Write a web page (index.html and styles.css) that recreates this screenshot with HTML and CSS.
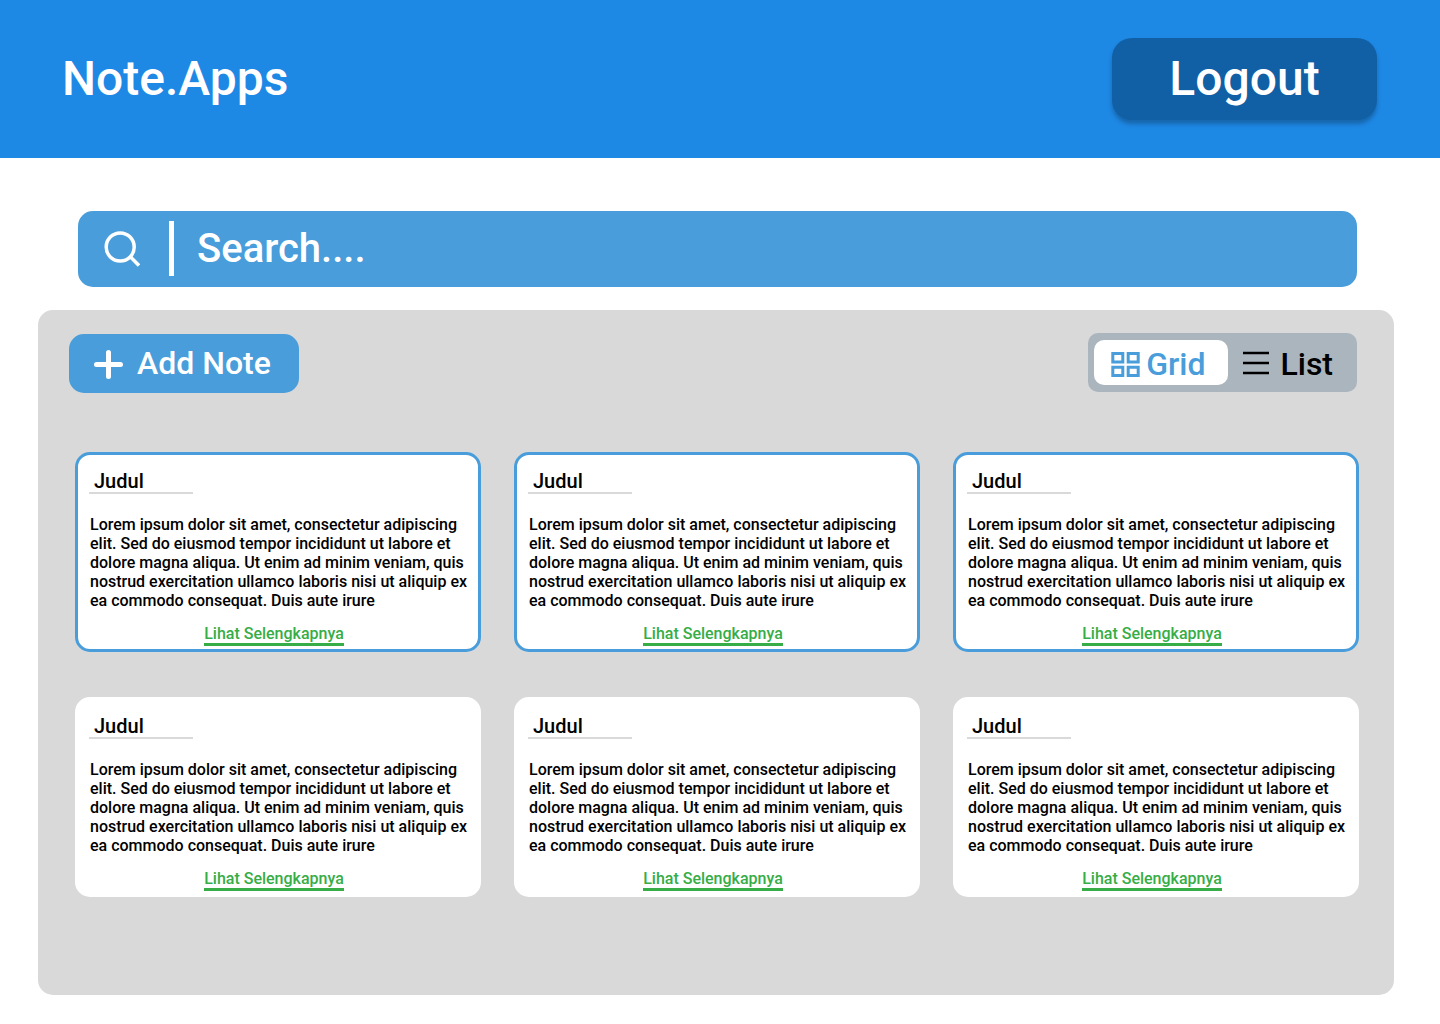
FILE: index.html
```html
<!DOCTYPE html>
<html lang="id">
<head>
  <meta charset="utf-8">
  <meta name="viewport" content="width=device-width, initial-scale=1">
  <title>Note.Apps</title>
  <link rel="stylesheet" href="styles.css">
</head>
<body>
  <header class="header">
    <h1 class="brand">Note.Apps</h1>
    <button class="logout" type="button">Logout</button>
  </header>

  <main>
    <label class="search">
      <svg class="search-icon" viewBox="0 0 36 36" fill="none" stroke="currentColor" stroke-width="3.5" aria-hidden="true">
        <circle cx="16.2" cy="16" r="14"/>
        <path d="M26.3 25.8 35 34.5"/>
      </svg>
      <span class="search-divider"></span>
      <input class="search-input" type="text" placeholder="Search...." aria-label="Search">
    </label>

    <section class="panel">
      <div class="toolbar">
        <button class="add-note" type="button">
          <svg class="plus-icon" viewBox="0 0 29 31" fill="none" stroke="currentColor" stroke-width="5" stroke-linecap="round" aria-hidden="true">
            <path d="M14.5 4.5v24M2.5 16.5h24"/>
          </svg>
          Add Note
        </button>
        <div class="view-toggle">
          <button class="view view-active" type="button" aria-pressed="true">
            <svg class="grid-icon" viewBox="0 0 29 25" fill="none" stroke="currentColor" stroke-width="3" aria-hidden="true">
              <path d="M1.8 1.5h10v8.6h-10zM17.2 1.5h10v8.6h-10zM1.8 15.2h10v8.3h-10zM17.2 15.2h10v8.3h-10z"/>
            </svg>
            Grid
          </button>
          <button class="view view-list" type="button" aria-pressed="false">
            <svg class="list-icon" viewBox="0 0 26 26" fill="none" stroke="currentColor" stroke-width="2.6" aria-hidden="true">
              <path d="M0 2h26M0 12h26M0 22h26"/>
            </svg>
            List
          </button>
        </div>
      </div>

      <div class="notes">
        <article class="note note-selected">
          <h2 class="note-title">Judul</h2>
          <p class="note-text">Lorem ipsum dolor sit amet, consectetur adipiscing elit. Sed do eiusmod tempor incididunt ut labore et dolore magna aliqua. Ut enim ad minim veniam, quis nostrud exercitation ullamco laboris nisi ut aliquip ex ea commodo consequat. Duis aute irure</p>
          <a class="note-more" href="#">Lihat Selengkapnya</a>
        </article>
        <article class="note note-selected">
          <h2 class="note-title">Judul</h2>
          <p class="note-text">Lorem ipsum dolor sit amet, consectetur adipiscing elit. Sed do eiusmod tempor incididunt ut labore et dolore magna aliqua. Ut enim ad minim veniam, quis nostrud exercitation ullamco laboris nisi ut aliquip ex ea commodo consequat. Duis aute irure</p>
          <a class="note-more" href="#">Lihat Selengkapnya</a>
        </article>
        <article class="note note-selected">
          <h2 class="note-title">Judul</h2>
          <p class="note-text">Lorem ipsum dolor sit amet, consectetur adipiscing elit. Sed do eiusmod tempor incididunt ut labore et dolore magna aliqua. Ut enim ad minim veniam, quis nostrud exercitation ullamco laboris nisi ut aliquip ex ea commodo consequat. Duis aute irure</p>
          <a class="note-more" href="#">Lihat Selengkapnya</a>
        </article>
        <article class="note">
          <h2 class="note-title">Judul</h2>
          <p class="note-text">Lorem ipsum dolor sit amet, consectetur adipiscing elit. Sed do eiusmod tempor incididunt ut labore et dolore magna aliqua. Ut enim ad minim veniam, quis nostrud exercitation ullamco laboris nisi ut aliquip ex ea commodo consequat. Duis aute irure</p>
          <a class="note-more" href="#">Lihat Selengkapnya</a>
        </article>
        <article class="note">
          <h2 class="note-title">Judul</h2>
          <p class="note-text">Lorem ipsum dolor sit amet, consectetur adipiscing elit. Sed do eiusmod tempor incididunt ut labore et dolore magna aliqua. Ut enim ad minim veniam, quis nostrud exercitation ullamco laboris nisi ut aliquip ex ea commodo consequat. Duis aute irure</p>
          <a class="note-more" href="#">Lihat Selengkapnya</a>
        </article>
        <article class="note">
          <h2 class="note-title">Judul</h2>
          <p class="note-text">Lorem ipsum dolor sit amet, consectetur adipiscing elit. Sed do eiusmod tempor incididunt ut labore et dolore magna aliqua. Ut enim ad minim veniam, quis nostrud exercitation ullamco laboris nisi ut aliquip ex ea commodo consequat. Duis aute irure</p>
          <a class="note-more" href="#">Lihat Selengkapnya</a>
        </article>
      </div>
    </section>
  </main>
</body>
</html>
```

FILE: styles.css
```css
*,
*::before,
*::after {
  box-sizing: border-box;
}

body {
  margin: 0;
  background: #fff;
  color: #000;
  font-family: Roboto, "Liberation Sans", sans-serif;
  font-size: 16px;
  font-weight: 500;
  line-height: 19px;
}

button,
input {
  border: 0;
  font: inherit;
  color: inherit;
}

button {
  cursor: pointer;
}

svg {
  display: block;
  flex: none;
}

.header {
  display: flex;
  align-items: center;
  justify-content: space-between;
  padding: 38px 63px 38px 62px;
  background: #1e88e5;
  color: #fff;
  font-size: 48px;
  line-height: 56px;
}

.brand {
  margin: 0;
  font-size: inherit;
  font-weight: 500;
}

.logout {
  min-width: 265px;
  padding: 13px 48px;
  border-radius: 20px;
  background: #1160a5;
  box-shadow: 0 4px 4px rgba(0, 0, 0, 0.25);
}

.search {
  display: flex;
  align-items: center;
  margin: 53px 83px 23px 78px;
  padding: 10px 26px 11px;
  border-radius: 15px;
  background: #489dda;
  color: #fff;
}

.search-icon {
  width: 36px;
  height: 36px;
}

.search-divider {
  width: 5px;
  height: 55px;
  margin: 0 23px 0 29px;
  background: #fff;
}

.search-input {
  flex: 1;
  min-width: 0;
  height: 48px;
  padding: 0;
  background: transparent;
  outline: none;
  font-size: 40px;
}

.search-input::placeholder {
  color: #fff;
  opacity: 1;
}

.panel {
  margin: 0 46px 29px 38px;
  padding: 23px 35px 98px 37px;
  border-radius: 15px;
  background: #d9d9d9;
}

.toolbar {
  display: flex;
  flex-wrap: wrap;
  align-items: flex-start;
  justify-content: space-between;
  gap: 16px;
  margin: 0 2px 59px -6px;
  font-size: 32px;
  line-height: 38px;
}

.add-note {
  display: flex;
  align-items: center;
  gap: 14px;
  min-width: 230px;
  margin-top: 1px;
  padding: 10px 25px 11px;
  border-radius: 15px;
  background: #489dda;
  color: #fff;
}

.plus-icon {
  width: 29px;
  height: 31px;
}

.view-toggle {
  display: flex;
  padding: 7px 6px;
  border-radius: 10px;
  background: #abb5be;
}

.view {
  display: flex;
  align-items: center;
  padding: 5px 18px 2px 15px;
  border-radius: 10px;
  background: transparent;
}

.view-list {
  gap: 11px;
}

.view-active {
  gap: 6px;
  padding: 5px 23px 2px 17px;
  background: #fff;
  color: #489dda;
}

.grid-icon {
  width: 29px;
  height: 25px;
}

.list-icon {
  width: 26px;
  height: 26px;
}

.notes {
  display: grid;
  grid-template-columns: repeat(auto-fit, minmax(320px, 1fr));
  gap: 45px 33px;
}

.note {
  display: flex;
  flex-direction: column;
  align-items: flex-start;
  padding: 16px 8px 3px 11px;
  border: 3px solid #fff;
  border-radius: 15px;
  background: #fff;
}

.note-selected {
  border-color: #489dda;
}

.note-title {
  width: 104px;
  margin: 0 0 21px;
  padding-left: 5px;
  border-bottom: 2px solid #d9d9d9;
  font-size: 20px;
  font-weight: 500;
  line-height: 21px;
}

.note-text {
  margin: 0 0 14px;
  padding-left: 1px;
}

.note-more {
  align-self: center;
  margin-right: 11px;
  border-bottom: 3px solid #36ad46;
  color: #36ad46;
  text-decoration: none;
}
```
